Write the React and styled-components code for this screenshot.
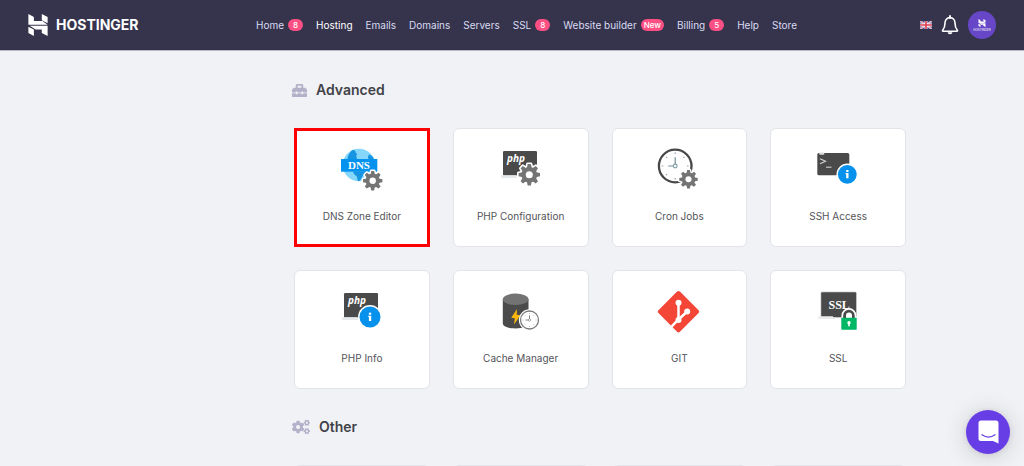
import React from 'react';
import styled, { createGlobalStyle } from 'styled-components';
import { FaToolbox, FaCogs } from 'react-icons/fa';

const GlobalStyle = createGlobalStyle`
  * {
    box-sizing: border-box;
  }

  body {
    margin: 0;
    background: #f1f2f6;
    font-family: Inter, "Liberation Sans", sans-serif;
  }
`;

const Page = styled.div`
  height: 100vh;
  overflow-y: auto;
  scrollbar-width: none;
`;

const Header = styled.header`
  display: flex;
  align-items: center;
  height: 51px;
  padding: 0 28px;
  background: #36344d;
  border-bottom: 1px solid #b9b9c3;
`;

const Brand = styled.a`
  display: flex;
  align-items: center;
  flex: 0 0 228px;
  gap: 8px;
  color: #ffffff;
  font-size: 14px;
  font-weight: 700;
  line-height: 20px;
  text-decoration: none;
`;

const Nav = styled.nav`
  display: flex;
  align-items: center;
  flex: 1;
  gap: 13px;
`;

const NavLink = styled.a`
  display: flex;
  align-items: center;
  gap: 4px;
  color: ${props => (props.$active ? '#ffffff' : '#d9dbf2')};
  font-size: 10px;
  line-height: 16px;
  white-space: nowrap;
  text-decoration: none;
`;

const Badge = styled.span`
  padding: 0 ${props => (props.$wide ? '3px' : '5px')};
  border-radius: 6px;
  background: #fc4f83;
  color: #ffffff;
  font-size: 8px;
  font-weight: 500;
  line-height: 12px;
`;

const Tools = styled.div`
  display: flex;
  align-items: center;
  gap: 9px;
`;

const IconButton = styled.button`
  display: flex;
  align-items: center;
  padding: 0;
  border: 0;
  background: none;
  color: #ffffff;
  cursor: pointer;
`;

const Avatar = styled(IconButton)`
  flex-direction: column;
  justify-content: center;
  gap: 2px;
  width: 28px;
  height: 28px;
  border-radius: 50%;
  background: #6747c7;
  font-family: inherit;
  font-size: 3px;
  line-height: 3px;
`;

const Main = styled.main`
  display: flex;
  flex-direction: column;
  gap: 28px;
  padding: 29px 118px 28px 292px;
`;

const Heading = styled.h2`
  display: flex;
  align-items: center;
  gap: 9px;
  margin: 0 0 28px;
  color: #414248;
  font-size: 14px;
  font-weight: 600;
  line-height: 20px;

  svg {
    color: #b3b1c9;
  }
`;

const CardGrid = styled.div`
  display: grid;
  grid-template-columns: repeat(4, 1fr);
  gap: 23px;
  padding-left: 2px;
`;

const Card = styled.a`
  display: flex;
  flex-direction: column;
  align-items: center;
  gap: 8px;
  min-height: 119px;
  padding: 15px 8px;
  border: 1px solid #e3e4e9;
  border-radius: ${props => (props.$marked ? '0' : '6px')};
  outline: ${props => (props.$marked ? '3px solid #ff0000' : 'none')};
  outline-offset: -3px;
  background: #ffffff;
  color: #545459;
  font-size: 10px;
  line-height: 16px;
  text-decoration: none;
`;

const ChatButton = styled.button`
  position: fixed;
  right: 14px;
  bottom: 12px;
  display: flex;
  align-items: center;
  justify-content: center;
  width: 44px;
  height: 44px;
  padding: 0;
  border: 0;
  border-radius: 50%;
  background: #673de6;
  box-shadow: 0 1px 6px rgba(0, 0, 0, 0.1), 0 2px 24px rgba(0, 0, 0, 0.16);
  cursor: pointer;
`;

const LogoMark = ({ width, height }) => (
  <svg width={width} height={height} viewBox="0 0 56 64" fill="currentColor">
    <path d="M0 0L16 9V20H41L56 31H0z" />
    <path d="M39 0L56 9V27L39 18z" />
    <path d="M0 37L16 45V64L0 55z" />
    <path d="M4 34.500H56V64L39 55V45H21z" />
  </svg>
);

const Flag = () => (
  <svg width="12" height="8" viewBox="0 0 12 8">
    <rect width="12" height="8" fill="#46549b" />
    <path d="M0 0L12 8M12 0L0 8" stroke="#f3e9f0" strokeWidth="1.8" />
    <path d="M0 0L12 8M12 0L0 8" stroke="#e0606e" strokeWidth="0.7" />
    <path d="M6 0V8M0 4H12" stroke="#ffffff" strokeWidth="2.8" />
    <path d="M6 0V8M0 4H12" stroke="#dc3b4c" strokeWidth="1.6" />
  </svg>
);

const Bell = () => (
  <svg width="18" height="20" viewBox="0 0 18 20" fill="none">
    <path
      d="M9 2.6C5.9 2.6 4 5 4 8c0 4.200-.9 5.700-2.300 7.200-.4.500-.2 1 .4 1h13.800c.6 0 .8-.5.400-1C14.900 13.700 14 12.200 14 8c0-3-1.900-5.400-5-5.400z"
      stroke="#fff"
      strokeWidth="1.600"
    />
    <path d="M9 1V3" stroke="#fff" strokeWidth="2" strokeLinecap="round" />
    <path d="M6.600 17.200h4.800a2.400 2 0 0 1-4.800 0z" fill="#fff" />
  </svg>
);

// one toothed wheel, repeated with different radii
const Gear = ({ x, y, r }) => {
  const teeth = [0, 45, 90, 135, 180, 225, 270, 315];
  const tooth = angle => (
    <path key={angle} d="M-2.300 -6L-1.500 -10H1.500L2.300 -6z" transform={`rotate(${angle})`} />
  );
  return (
    <g transform={`translate(${x} ${y}) scale(${r / 10})`}>
      <g fill="#fff" stroke="#fff" strokeWidth="3" strokeLinejoin="round">
        <circle r="7.300" />
        {teeth.map(tooth)}
      </g>
      <g fill="#747474">
        <circle r="7.300" />
        {teeth.map(tooth)}
      </g>
      <circle r="3.300" fill="#fff" />
    </g>
  );
};

const Info = ({ x, y, r }) => (
  <g transform={`translate(${x} ${y})`}>
    <circle r={r + 1.4} fill="#fff" />
    <circle r={r} fill="#0591ec" />
    <rect x="-1.100" y="-4.300" width="2.300" height="2" fill="#fff" />
    <path d="M-1.700 -1.300H1.200V4H-1.100V0H-1.700z" fill="#fff" />
  </g>
);

const IconBox = ({ children }) => (
  <svg width="56" height="56" viewBox="0 0 56 56" fill="none">
    {children}
  </svg>
);

const PhpScreen = () => (
  <>
    <rect x="10" y="7" width="34" height="24.500" rx="1.300" fill="#4a4a4a" />
    <path d="M8 31.300H23.500V33H24V34H9.500Q8 34 8 32.500z" fill="#e6e9eb" />
    <text
      x="14"
      y="18"
      fill="#fff"
      fontFamily="Open Sans, sans-serif"
      fontSize="10"
      fontWeight="700"
      fontStyle="italic"
    >
      php
    </text>
  </>
);

const DnsIcon = () => (
  <IconBox>
    <circle cx="25" cy="21" r="16.300" fill="#84d6fb" />
    <path
      d="M13.500 15C13.800 11 15.500 9.500 17 7.300C18.500 5.800 20 5.300 20.500 6.500C22 7 21 8.500 22.500 9.500C24 10.500 21.500 11.500 22.500 12.500L23 15z"
      fill="#1795e0"
    />
    <path d="M35 10.500C37.500 11 39 13 40 15H34.500C33.500 13.500 34 12 35 10.500z" fill="#1795e0" />
    <path
      d="M19 27.500H31.500C31 29.500 29.500 30.500 28.500 32C27.500 34 27 36.500 24.500 37.300C23 36 23.500 33.500 22.500 32C20.500 31 19.500 29.500 19 27.500z"
      fill="#1795e0"
    />
    <rect x="7" y="15" width="36.300" height="12.700" fill="#0392ee" />
    <text
      x="25"
      y="25"
      fill="#fff"
      fontFamily="Liberation Serif, serif"
      fontSize="11"
      fontWeight="700"
      textAnchor="middle"
    >
      DNS
    </text>
    <Gear x={38.7} y={36.7} r={9.7} />
  </IconBox>
);

const PhpConfigIcon = () => (
  <IconBox>
    <PhpScreen />
    <Gear x={36.300} y={30.700} r={10.700} />
  </IconBox>
);

const CronIcon = () => (
  <IconBox>
    <circle cx="24.200" cy="22" r="16.300" fill="#fff" stroke="#474747" strokeWidth="2.300" />
    <g stroke="#8fa3aa" strokeWidth="1.200">
      <path d="M24.200 8.500v1.600M24.200 34v1.600M10.700 22h1.600M36 22h1.600" />
      <path d="M15 12.800l1.100 1.100M32.300 30.100l1.100 1.100M15 31.200l1.100-1.100M32.300 13.900l1.100-1.100" />
    </g>
    <path d="M24.200 20V13.300M22.200 22H17.300" stroke="#6f8d96" strokeWidth="1.200" />
    <circle cx="24.200" cy="22" r="1.900" stroke="#7f9aa3" strokeWidth="1.100" />
    <Gear x={37.5} y={35.3} r={9.2} />
  </IconBox>
);

const SshIcon = () => (
  <IconBox>
    <rect x="7.300" y="9" width="32" height="22.300" rx="1.600" fill="#4a4a4a" />
    <rect x="9.300" y="8.500" width="5" height="2.300" rx="0.800" fill="#d9dbdc" />
    <path d="M10 14.800L15.500 17.300L10 19.800" stroke="#d0d2d3" strokeWidth="1.200" />
    <path d="M16 23.200H21.500" stroke="#d0d2d3" strokeWidth="1.100" />
    <Info x={37.3} y={30.3} r={9.4} />
  </IconBox>
);

const PhpInfoIcon = () => (
  <IconBox>
    <PhpScreen />
    <Info x={36} y={31} r={10.5} />
  </IconBox>
);

const CacheIcon = () => (
  <IconBox>
    <path d="M9.800 13.300V37.500C9.800 44 35.500 44 35.500 37.500V13.300z" fill="#4b4b4b" />
    <ellipse cx="22.650" cy="13.300" rx="12.850" ry="5.700" fill="#737373" />
    <path d="M24 23L18.200 31.700L21.800 32.200L21 38.500L27.500 29.300L23.700 28.700z" fill="#fbb70b" />
    <circle cx="36.500" cy="34" r="10.700" fill="#fff" />
    <circle cx="36.500" cy="34" r="9" stroke="#7b7b7b" strokeWidth="1.300" />
    <path d="M36.500 34V29.300M36.500 34H32.500" stroke="#858585" strokeWidth="1" />
    <circle cx="36.500" cy="34" r="1.200" stroke="#858585" strokeWidth="0.700" fill="#fff" />
    <path
      d="M36.500 27v1M36.500 40v1M29.500 34h1M42.500 34h1M31.700 29.200l.6.600M40.700 38.200l.6.600M31.700 38.800l.6-.6M40.700 29.800l.6-.6"
      stroke="#a9a9a9"
      strokeWidth="0.800"
    />
  </IconBox>
);

const GitIcon = () => (
  <IconBox>
    <rect
      x="12.300"
      y="10.500"
      width="30.400"
      height="30.400"
      rx="2"
      transform="rotate(45 27.500 25.700)"
      fill="#f34637"
    />
    <g stroke="#fff" strokeWidth="2.500">
      <path d="M27.500 16.700V34" />
      <path d="M36.200 25.500L27.500 33.500L20.500 40.700" />
    </g>
    <circle cx="27.500" cy="16.700" r="3" fill="#fff" />
    <circle cx="36.200" cy="25.500" r="3" fill="#fff" />
    <circle cx="27.500" cy="34" r="3" fill="#fff" />
  </IconBox>
);

const SslIcon = () => (
  <IconBox>
    <rect x="10.300" y="5.500" width="36.500" height="26" rx="1.500" fill="#d9dadb" />
    <rect x="11.200" y="6.300" width="35" height="25" rx="1" fill="#4a4a4a" />
    <path d="M8 30.300H23V31.500H25V33H9.500Q8 33 8 31.500z" fill="#e9ebed" />
    <text
      x="18.500"
      y="22.500"
      fill="#fff"
      fontFamily="Liberation Serif, serif"
      fontSize="12"
      fontWeight="700"
    >
      SSL
    </text>
    <path d="M32.500 32V29.500a6.500 6.500 0 0 1 13 0V32z" fill="#4a4a4a" />
    <path d="M32.300 32V29.500a6.600 6.600 0 0 1 13.200 0V32" stroke="#fff" strokeWidth="1.700" />
    <path d="M36 32V29.500a3 3 0 0 1 6 0V32z" fill="#fff" />
    <rect x="31.300" y="31.700" width="15.400" height="12" rx="0.600" fill="#00b765" />
    <circle cx="39" cy="36.700" r="1.700" fill="#fff" />
    <rect x="38.200" y="37" width="1.600" height="3.300" fill="#fff" />
  </IconBox>
);

const ChatIcon = () => (
  <svg width="21" height="24" viewBox="0 0 21 24" fill="none">
    <path
      d="M3 0.500H18Q20.500 0.500 20.500 3V23.500L15 21H3Q0.500 21 0.500 18.500V3Q0.500 0.500 3 0.500z"
      fill="#fff"
    />
    <path d="M4 14.800Q10.500 19.500 17 14.800" stroke="#673de6" strokeWidth="1.400" strokeLinecap="round" />
  </svg>
);

const navItems = [
  { label: 'Home', badge: '8' },
  { label: 'Hosting', active: true },
  { label: 'Emails' },
  { label: 'Domains' },
  { label: 'Servers' },
  { label: 'SSL', badge: '8' },
  { label: 'Website builder', badge: 'New' },
  { label: 'Billing', badge: '5' },
  { label: 'Help' },
  { label: 'Store' },
];

const advancedItems = [
  { label: 'DNS Zone Editor', icon: <DnsIcon />, marked: true },
  { label: 'PHP Configuration', icon: <PhpConfigIcon /> },
  { label: 'Cron Jobs', icon: <CronIcon /> },
  { label: 'SSH Access', icon: <SshIcon /> },
  { label: 'PHP Info', icon: <PhpInfoIcon /> },
  { label: 'Cache Manager', icon: <CacheIcon /> },
  { label: 'GIT', icon: <GitIcon /> },
  { label: 'SSL', icon: <SslIcon /> },
];

function App() {
  return (
    <Page>
      <GlobalStyle />
      <Header>
        <Brand href="#">
          <LogoMark width="20" height="22" />
          HOSTINGER
        </Brand>
        <Nav>
          {navItems.map(item => (
            <NavLink key={item.label} href="#" $active={item.active}>
              {item.label}
              {item.badge && <Badge $wide={item.badge.length > 1}>{item.badge}</Badge>}
            </NavLink>
          ))}
        </Nav>
        <Tools>
          <IconButton type="button"><Flag /></IconButton>
          <IconButton type="button"><Bell /></IconButton>
          <Avatar type="button">
            <LogoMark width="8" height="8" />
            HOSTINGER
          </Avatar>
        </Tools>
      </Header>

      <Main>
        <section>
          <Heading><FaToolbox size={15} />Advanced</Heading>
          <CardGrid>
            {advancedItems.map(item => (
              <Card key={item.label} href="#" $marked={item.marked}>
                {item.icon}
                {item.label}
              </Card>
            ))}
          </CardGrid>
        </section>

        <section>
          <Heading><FaCogs size={18} />Other</Heading>
          <CardGrid>
            <Card href="#" />
            <Card href="#" />
            <Card href="#" />
            <Card href="#" />
          </CardGrid>
        </section>
      </Main>

      <ChatButton type="button"><ChatIcon /></ChatButton>
    </Page>
  );
}

export default App;
